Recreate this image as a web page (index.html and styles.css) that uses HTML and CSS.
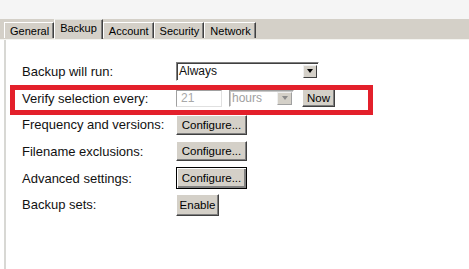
FILE: index.html
```html
<!DOCTYPE html>
<html>
<head>
<meta charset="utf-8">
<link rel="stylesheet" href="styles.css">
</head>
<body>
<div class="topbar"></div>
<div class="tabstrip">
  <div class="tab">General</div>
  <div class="tab tab--active">Backup</div>
  <div class="tab">Account</div>
  <div class="tab">Security</div>
  <div class="tab">Network</div>
</div>
<div class="panel">
  <div class="form">
    <span class="label">Backup will run:</span>
    <div class="select select--wide">
      <span class="select__value">Always</span>
      <span class="select__btn"><span class="arrow"></span></span>
    </div>

    <span class="label">Verify selection every:</span>
    <div class="controls">
      <div class="input input--disabled">21</div>
      <div class="select select--small select--disabled">
        <span class="select__value">hours</span>
        <span class="select__btn"><span class="arrow"></span></span>
      </div>
      <button class="btn btn--now">Now</button>
    </div>

    <span class="label">Frequency and versions:</span>
    <div><button class="btn btn--cfg">Configure...</button></div>

    <span class="label">Filename exclusions:</span>
    <div><button class="btn btn--cfg">Configure...</button></div>

    <span class="label">Advanced settings:</span>
    <div><button class="btn btn--cfg btn--default">Configure...</button></div>

    <span class="label">Backup sets:</span>
    <div><button class="btn btn--enable">Enable</button></div>
  </div>
  <div class="highlight"></div>
</div>
</body>
</html>
```

FILE: styles.css
```css
html, body {
  margin: 0;
  padding: 0;
}
body {
  width: 469px;
  height: 269px;
  overflow: hidden;
  background: #ffffff;
  font-family: "Liberation Sans", Arial, sans-serif;
  color: #111;
}
.topbar {
  height: 19px;
  background: #f5f5f5;
}
.tabstrip {
  height: 20px;
  background: #d4d0c8;
  border-bottom: 1px solid #f4f4f0;
  display: flex;
  align-items: flex-end;
  padding-left: 4px;
  box-sizing: content-box;
}
.tab {
  height: 16px;
  margin-bottom: 1px;
  box-sizing: border-box;
  padding: 0 4px 0 5px;
  font-size: 11px;
  line-height: 14px;
  color: #000;
  background: #d4d0c8;
  border-top: 1px solid #ffffff;
  border-left: 1px solid #ffffff;
  border-right: 1px solid #404040;
  box-shadow: inset -1px 0 #808080;
  display: flex;
  align-items: center;
}
.tab--active {
  height: 20px;
  margin-bottom: 0;
  padding: 0 5px 3px;
  border-top: 1px solid #e8e8e4;
}
.panel {
  position: relative;
  margin-left: 4px;
  border-left: 2px solid #d8d8d4;
  height: 229px;
  padding: 18px 0 0 16px;
  box-sizing: border-box;
}
.form {
  display: grid;
  grid-template-columns: 154px auto;
  grid-auto-rows: 26.7px;
  align-items: center;
}
.label {
  font-size: 13px;
  color: #111;
}
.controls {
  display: flex;
  align-items: center;
}
.select {
  display: flex;
  align-items: center;
  height: 19px;
  box-sizing: border-box;
  background: #fff;
  border: 1px solid;
  border-color: #808080 #ffffff #ffffff #808080;
  box-shadow: inset 1px 1px #404040;
  font-size: 12px;
}
.select--wide {
  width: 143px;
}
.select--small {
  width: 65px;
  height: 17px;
  margin-left: 7px;
  border-color: #a0a0a0 #ffffff #ffffff #a0a0a0;
  box-shadow: inset 1px 1px #c8c8c8;
}
.select__value {
  flex: 1;
  padding-left: 2px;
}
.select__btn {
  width: 14px;
  height: 13px;
  margin-right: 1px;
  box-sizing: border-box;
  background: #d4d0c8;
  border: 1px solid;
  border-color: #f0f0f0 #404040 #404040 #f0f0f0;
  display: flex;
  align-items: center;
  justify-content: center;
}
.select--small .select__btn {
  height: 13px;
  width: 15px;
  border-color: #f0f0f0 #a0a0a0 #a0a0a0 #f0f0f0;
}
.arrow {
  width: 0;
  height: 0;
  border-left: 3.5px solid transparent;
  border-right: 3.5px solid transparent;
  border-top: 4px solid #000;
}
.select--disabled {
  color: #a0a0a0;
}
.select--disabled .arrow {
  border-top-color: #8a8a8a;
}
.input {
  width: 46px;
  height: 17px;
  box-sizing: border-box;
  border: 1px solid;
  border-color: #a0a0a0 #e0e0e0 #e0e0e0 #a0a0a0;
  font-size: 12px;
  line-height: 15px;
  padding-left: 4px;
  background: #fff;
}
.input--disabled {
  color: #a8a8a8;
}
.btn {
  font-family: "Liberation Sans", Arial, sans-serif;
  font-size: 11.5px;
  color: #000;
  background: #d4d0c8;
  border: 1px solid;
  border-color: #ffffff #404040 #404040 #ffffff;
  box-shadow: inset -1px -1px #808080;
  padding: 0;
  margin: 0;
  box-sizing: border-box;
  display: block;
}
.btn--now {
  width: 33px;
  height: 18px;
  margin-left: 8px;
}
.btn--cfg {
  width: 71px;
  height: 20px;
}
.btn--default {
  height: 22px;
  border: 1px solid #000;
  box-shadow: inset 1px 1px #ffffff, inset -2px -2px #808080;
}
.btn--enable {
  width: 43px;
  height: 22px;
}
.highlight {
  position: absolute;
  left: 4px;
  top: 45px;
  width: 363px;
  height: 30px;
  box-sizing: border-box;
  border: 5px solid #e3202b;
}
```
